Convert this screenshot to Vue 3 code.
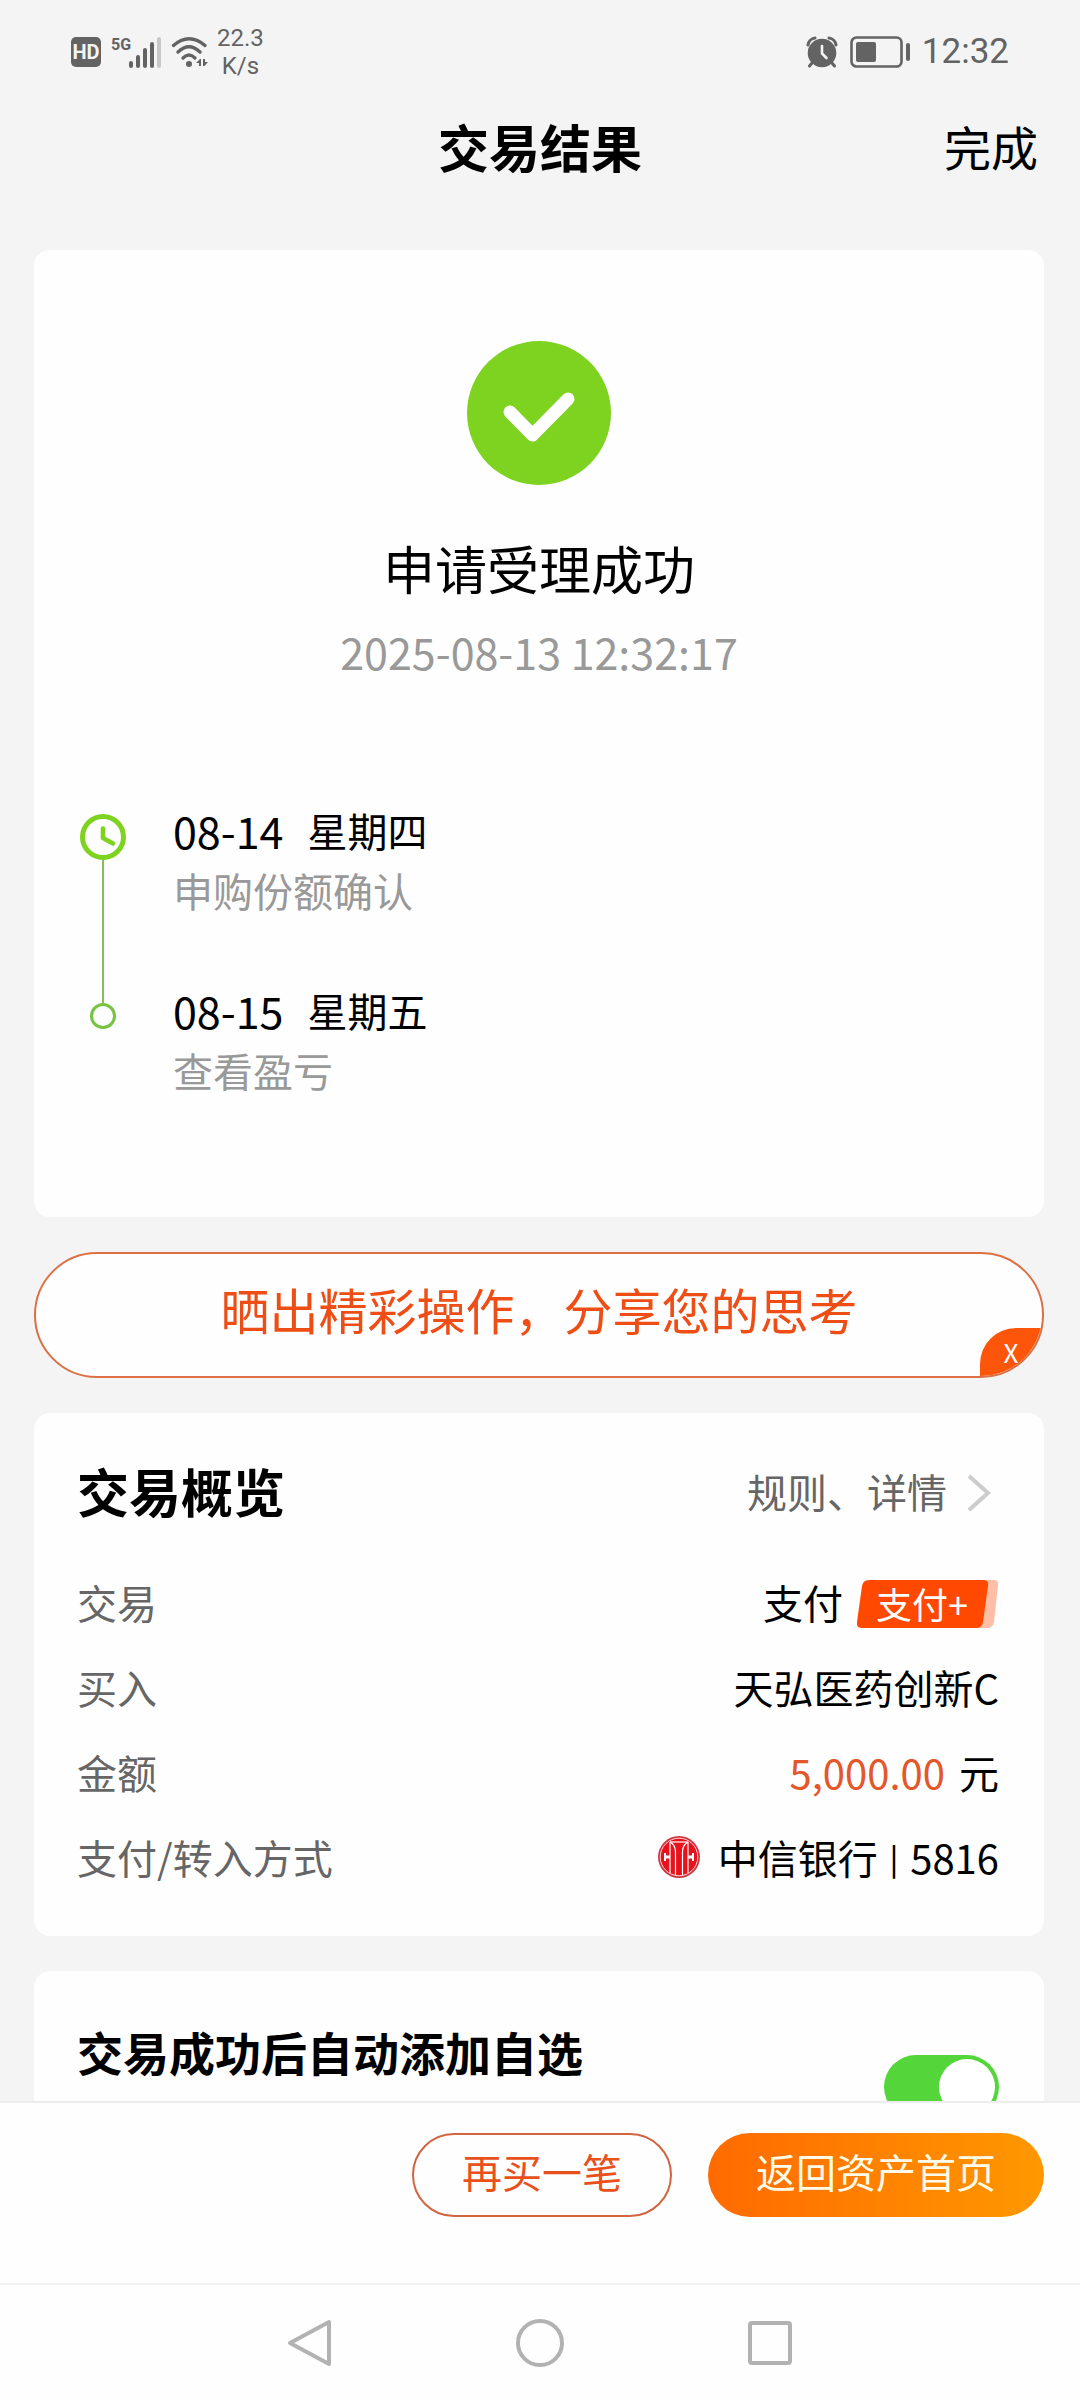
<template>
  <div class="page">
    <div class="status-bar">
      <div class="status-group">
        <svg class="icon-hd" viewBox="0 0 30 30">
          <rect width="30" height="30" rx="5" fill="#636363" />
          <text x="15" y="22" text-anchor="middle" class="hd-text">HD</text>
        </svg>
        <svg class="icon-signal" viewBox="0 0 52 34">
          <text x="0" y="15" class="net-text">5G</text>
          <g fill="#636363">
            <rect x="18" y="26" width="4" height="7" rx="2" />
            <rect x="25" y="20" width="4" height="13" rx="2" />
            <rect x="32" y="13" width="4" height="20" rx="2" />
            <rect x="39" y="7" width="4" height="26" rx="2" />
          </g>
          <rect x="46" y="2" width="4" height="31" rx="2" fill="#c8c8c8" />
        </svg>
        <svg class="icon-wifi" viewBox="0 0 38 34">
          <g fill="none" stroke="#636363" stroke-width="3.4" stroke-linecap="round">
            <path d="M2.500 10.500 Q18 -3 34 10.500" />
            <path d="M7 17 Q18 6.500 29 17" />
            <path d="M12 23 Q18 17 24 23" />
          </g>
          <circle cx="18" cy="29" r="3" fill="#636363" />
          <path d="M25 28 L29 24 H30 V31 H28 V28 Z M32 24 H34 V27 H37 L33.500 31 H32 Z" fill="#636363" />
        </svg>
        <div class="net-speed">
          <span>22.3</span>
          <span>K/s</span>
        </div>
      </div>
      <div class="status-group">
        <svg class="icon-alarm" viewBox="0 0 32 32">
          <circle cx="16" cy="17" r="14.300" fill="#636363" />
          <path d="M2 9 A8 8 0 0 1 9 2 M23 2 A8 8 0 0 1 30 9" fill="none" stroke="#636363" stroke-width="3" stroke-linecap="round" />
          <path d="M6 27 L3.500 30 M26 27 L28.500 30" stroke="#636363" stroke-width="3" stroke-linecap="round" />
          <path d="M16 10 V17.500 L20.500 22" fill="none" stroke="#f4f4f4" stroke-width="2.600" stroke-linecap="round" />
        </svg>
        <svg class="icon-battery" viewBox="0 0 60 32">
          <rect x="1.500" y="1.500" width="50" height="29" rx="5" fill="none" stroke="#636363" stroke-width="2.600" />
          <rect x="6" y="6" width="20" height="20" rx="2" fill="#636363" />
          <rect x="56" y="7" width="4" height="18" rx="2" fill="#636363" />
        </svg>
        <span class="clock">12:32</span>
      </div>
    </div>

    <header class="nav-header">
      <h1 class="nav-title">交易结果</h1>
      <button type="button" class="nav-done">完成</button>
    </header>

    <main class="content">
      <section class="card result-card">
        <svg class="result-icon" viewBox="0 0 144 144">
          <circle cx="72" cy="72" r="72" fill="#7ed321" />
          <path d="M43 71 L65.500 94 L101 58" fill="none" stroke="#fff" stroke-width="13" stroke-linecap="round" stroke-linejoin="round" />
        </svg>
        <h2 class="result-title">申请受理成功</h2>
        <time class="result-time">2025-08-13 12:32:17</time>

        <ol class="timeline">
          <li v-for="(step, index) in steps" :key="step.date" class="step">
            <div class="step-rail">
              <svg v-if="index === 0" class="step-clock" viewBox="0 0 46 46">
                <circle cx="23" cy="23" r="20.500" fill="none" stroke="#7ed321" stroke-width="5" />
                <path d="M23 14.500 V24 L33 29.500" fill="none" stroke="#7ed321" stroke-width="4.600" stroke-linecap="round" stroke-linejoin="round" />
              </svg>
              <span v-else class="step-dot"></span>
              <span v-if="index < steps.length - 1" class="step-line"></span>
            </div>
            <div class="step-body">
              <div class="step-date">
                <span class="step-day">{{ step.date }}</span>
                <span>{{ step.week }}</span>
              </div>
              <div class="step-desc">{{ step.desc }}</div>
            </div>
          </li>
        </ol>
      </section>

      <div v-if="showShare" class="share-bar">
        <a href="#share" class="share-link">晒出精彩操作，分享您的思考</a>
        <button type="button" class="share-close" @click="showShare = false">X</button>
      </div>

      <section class="card overview-card">
        <div class="overview-header">
          <h2 class="overview-title">交易概览</h2>
          <a href="#detail" class="overview-more">
            规则、详情
            <svg class="icon-arrow" viewBox="0 0 24 38">
              <path d="M2 2 L21 19 L2 36" fill="none" stroke="#ccc" stroke-width="4" />
            </svg>
          </a>
        </div>
        <dl class="overview-list">
          <div class="row">
            <dt>交易</dt>
            <dd>
              支付
              <span class="pay-badge">
                <svg class="pay-badge-bg" viewBox="0 0 142 48" preserveAspectRatio="none">
                  <path d="M20 0 H137 Q142 0 141 5 L137 42 Q136 48 130 48 H20 Z" fill="#ffbfa6" />
                  <path d="M12 0 H126 Q132 0 131 6 L126 42 Q125 48 119 48 H5 Q-1 48 0 42 L5 6 Q6 0 12 0 Z" fill="#ff4800" />
                </svg>
                <span class="pay-badge-text">支付+</span>
              </span>
            </dd>
          </div>
          <div class="row">
            <dt>买入</dt>
            <dd>天弘医药创新C</dd>
          </div>
          <div class="row">
            <dt>金额</dt>
            <dd><span class="amount">5,000.00</span>元</dd>
          </div>
          <div class="row">
            <dt>支付/转入方式</dt>
            <dd>
              <svg class="icon-bank" viewBox="0 0 42 42">
                <circle cx="21" cy="21" r="21" fill="#cf3340" />
                <circle cx="21" cy="21" r="18.800" fill="#e8121d" stroke="#fbd5d5" stroke-width="1" />
                <g fill="none" stroke="#fff" stroke-width="1.200">
                  <path d="M12 6 Q17.500 9 17.500 16 V39.500" />
                  <path d="M30 6 Q24.500 9 24.500 16 V39.500" />
                  <path d="M12 6 V37 M30 6 V37" />
                  <path d="M12 6 H30" />
                </g>
                <path d="M7 17 V25 M35 17 V25" stroke="#fff" stroke-width="2" />
                <path d="M7 21 H12 M30 21 H35" stroke="#fff" stroke-width="3" />
              </svg>
              <span>中信银行</span>
              <span class="bank-split">|</span>
              <span>5816</span>
            </dd>
          </div>
        </dl>
      </section>

      <section class="card watch-card">
        <label for="auto-watch" class="watch-label">交易成功后自动添加自选</label>
        <input id="auto-watch" v-model="autoWatch" type="checkbox" class="switch" />
      </section>
    </main>

    <footer class="action-bar">
      <button type="button" class="btn btn-outline">再买一笔</button>
      <button type="button" class="btn btn-primary">返回资产首页</button>
    </footer>

    <nav class="system-nav">
      <button type="button" class="system-key" aria-label="返回">
        <svg viewBox="0 0 48 48">
          <path d="M43 3 V45 L4 24 Z" fill="none" stroke="#b2b2b2" stroke-width="4" stroke-linejoin="round" />
        </svg>
      </button>
      <button type="button" class="system-key" aria-label="主屏幕">
        <svg viewBox="0 0 48 48">
          <circle cx="24" cy="24" r="22" fill="none" stroke="#b2b2b2" stroke-width="4" />
        </svg>
      </button>
      <button type="button" class="system-key" aria-label="最近任务">
        <svg viewBox="0 0 48 48">
          <rect x="4" y="4" width="40" height="40" rx="2" fill="none" stroke="#b2b2b2" stroke-width="4" />
        </svg>
      </button>
    </nav>
  </div>
</template>

<script setup>
import { ref } from "vue";

const showShare = ref(true);
const autoWatch = ref(true);

const steps = [
  { date: "08-14", week: "星期四", desc: "申购份额确认" },
  { date: "08-15", week: "星期五", desc: "查看盈亏" },
];
</script>

<style>
body { margin: 0; background: #f4f4f4; }
</style>

<style scoped>
.page {
  display: flex; flex-direction: column; height: 100vh; overflow: hidden;
  background: #f4f4f4; color: #000;
  font-family: "Noto Sans CJK SC", sans-serif; font-size: 40px; line-height: 60px;
}
h1, h2, ol, dl, dd { margin: 0; padding: 0; font-weight: 400; }
button { padding: 0; border: 0; background: none; font-family: inherit; cursor: pointer; }
a { text-decoration: none; }
svg { display: block; flex-shrink: 0; }

.status-bar {
  display: flex; justify-content: space-between; align-items: center;
  height: 104px; padding: 0 71px; flex-shrink: 0; color: #636363;
  font-family: Roboto, sans-serif;
}
.status-group { display: flex; align-items: center; }
.icon-hd { width: 30px; height: 30px; }
.hd-text { font: 700 20px Roboto, sans-serif; fill: #f4f4f4; }
.icon-signal { width: 52px; height: 34px; margin-left: 10px; }
.net-text { font: 700 16px Roboto, sans-serif; fill: #636363; }
.icon-wifi { width: 38px; height: 34px; margin-left: 8px; }
.net-speed {
  display: flex; flex-direction: column; align-items: center;
  margin-left: 8px; font-size: 24px; line-height: 28px;
}
.icon-alarm { width: 32px; height: 32px; }
.icon-battery { width: 60px; height: 32px; margin: 0 12px; }
.clock { font-size: 35px; line-height: 40px; }

.nav-header {
  display: grid; grid-template-columns: 1fr auto 1fr; align-items: center;
  height: 84px; margin-bottom: 62px; padding: 0 42px; flex-shrink: 0;
}
.nav-title { grid-column: 2; font-size: 51px; font-weight: 700; }
.nav-done { justify-self: end; font-size: 47px; line-height: 60px; color: #000; }

.content {
  flex: 1; min-height: 0; overflow-y: auto; scrollbar-width: none;
  display: flex; flex-direction: column; gap: 35px; padding: 0 36px 0 34px;
}
.card { flex-shrink: 0; background: #fefefe; border-radius: 16px; }

.result-card { display: flex; flex-direction: column; align-items: center; padding: 91px 45px 117px; }
.result-icon { width: 144px; height: 144px; }
.result-title { margin-top: 53px; font-size: 52px; line-height: 60px; }
.result-time { margin-top: 23px; font-size: 43px; color: #999; }

.timeline { align-self: stretch; margin-top: 119px; list-style: none; }
.step { display: flex; gap: 46px; }
.step:not(:last-child) { min-height: 180px; }
.step-rail { display: flex; flex-direction: column; align-items: center; width: 48px; padding-top: 14px; }
.step:last-child .step-rail { padding-top: 23px; }
.step-clock { width: 46px; height: 46px; }
.step-dot { width: 20px; height: 20px; border: 3px solid #76c442; border-radius: 50%; }
.step-line { flex: 1; width: 2px; margin-bottom: -23px; background: #85bf55; }
.step-date { display: flex; align-items: center; gap: 24px; }
.step-day { font-size: 43px; }
.step-desc { color: #999; }

.share-bar {
  position: relative; flex-shrink: 0; overflow: hidden;
  display: flex; justify-content: center; align-items: center;
  box-sizing: border-box; height: 126px;
  border: 2px solid #dc7044; border-radius: 63px; background: #fefefe;
}
.share-link { padding-bottom: 12px; font-size: 49px; color: #ee4e16; }
.share-close {
  position: absolute; right: 0; bottom: 0; width: 62px; height: 48px;
  border-radius: 36px 0 0 0; background: #fd560a; color: #fff;
  font-size: 26px; line-height: 48px;
}

.overview-card { padding: 48px 45px 49px 43px; }
.overview-header { display: flex; justify-content: space-between; align-items: center; }
.overview-title { font-size: 52px; font-weight: 700; }
.overview-more { display: flex; align-items: center; gap: 20px; padding-right: 8px; color: #666; }
.icon-arrow { width: 24px; height: 38px; margin-top: 4px; }
.overview-list { display: flex; flex-direction: column; gap: 25px; margin-top: 51px; }
.row { display: flex; justify-content: space-between; align-items: center; height: 60px; }
.row dt { color: #666; }
.row dd { display: flex; align-items: center; }
.pay-badge { position: relative; width: 142px; height: 48px; margin: 4px 0 0 14px; color: #fff; }
.pay-badge-bg { width: 100%; height: 100%; }
.pay-badge-text { position: absolute; top: 0; left: 19px; font-size: 36px; line-height: 46px; }
.amount { margin-right: 14px; color: #e4572a; }
.icon-bank { width: 42px; height: 42px; margin-right: 18px; }
.bank-split { margin: 0 12px; font-size: 30px; font-weight: 500; }

.watch-card { display: flex; justify-content: space-between; align-items: center; padding: 50px 45px 51px 43px; }
.watch-label { padding-bottom: 72px; font-size: 46px; font-weight: 700; }
.switch {
  appearance: none; width: 115px; height: 64px; margin: 0; padding: 4px;
  border-radius: 32px; background: #ccc; cursor: pointer;
  display: flex; box-sizing: border-box;
}
.switch::before { content: ""; width: 56px; height: 56px; border-radius: 50%; background: #fff; }
.switch:checked { justify-content: flex-end; background: #54d63b; }

.action-bar {
  display: flex; justify-content: flex-end; align-items: flex-start; gap: 36px;
  box-sizing: border-box; height: 182px; padding: 30px 36px 0; flex-shrink: 0;
  border-top: 2px solid #ececec; background: #fefefe;
}
.btn { box-sizing: border-box; height: 84px; padding: 0 48px 8px; border-radius: 42px; font-size: 40px; line-height: 60px; }
.btn-outline { border: 2px solid #d2643f; color: #e8511c; }
.btn-primary { background: linear-gradient(90deg, #ff6a00, #ff9800); color: #fffbe8; }

.system-nav {
  display: flex; justify-content: center; align-items: center; gap: 182px;
  box-sizing: border-box; height: 117px; flex-shrink: 0;
  border-top: 2px solid #f2f2f2; background: #fefefe;
}
.system-key { width: 48px; height: 48px; }
</style>
